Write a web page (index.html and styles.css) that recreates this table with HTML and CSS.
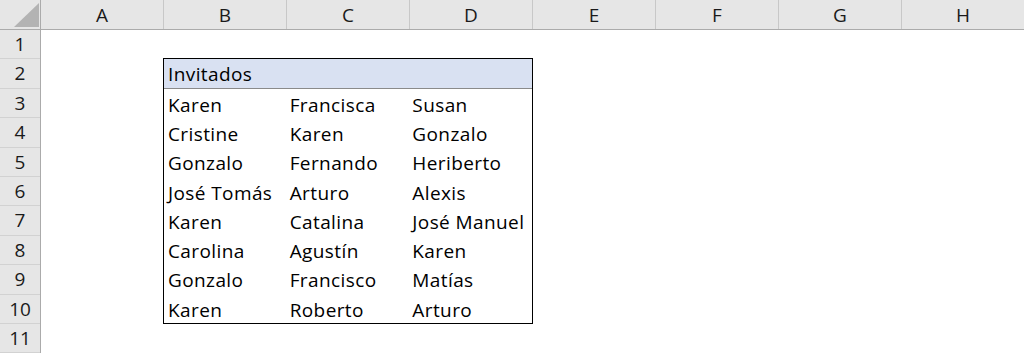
FILE: index.html
```html
<!DOCTYPE html>
<html lang="es">

<head>
    <meta charset="UTF-8">
    <meta name="viewport" content="width=device-width, initial-scale=1.0">
    <title>Invitados</title>
    <link rel="stylesheet" href="styles.css">
</head>

<body>

    <div class="sheet">
        <!-- Column letters -->
        <div class="col-heads">
            <div class="corner">
                <svg width="40" height="29" viewBox="0 0 40 29">
                    <polygon points="14,27 39,27 39,3" fill="#b3b3b3" />
                </svg>
            </div>
            <div class="col-head">A</div>
            <div class="col-head">B</div>
            <div class="col-head">C</div>
            <div class="col-head">D</div>
            <div class="col-head">E</div>
            <div class="col-head">F</div>
            <div class="col-head">G</div>
            <div class="col-head">H</div>
        </div>

        <div class="sheet-body">
            <!-- Row numbers -->
            <div class="row-heads">
                <div class="row-head">1</div>
                <div class="row-head">2</div>
                <div class="row-head">3</div>
                <div class="row-head">4</div>
                <div class="row-head">5</div>
                <div class="row-head">6</div>
                <div class="row-head">7</div>
                <div class="row-head">8</div>
                <div class="row-head">9</div>
                <div class="row-head">10</div>
                <div class="row-head">11</div>
            </div>

            <!-- Cells area, gridlines hidden -->
            <div class="cells">
                <div class="guests">
                    <div class="guests-title">Invitados</div>
                    <div class="cell">Karen</div>
                    <div class="cell">Francisca</div>
                    <div class="cell">Susan</div>
                    <div class="cell">Cristine</div>
                    <div class="cell">Karen</div>
                    <div class="cell">Gonzalo</div>
                    <div class="cell">Gonzalo</div>
                    <div class="cell">Fernando</div>
                    <div class="cell">Heriberto</div>
                    <div class="cell">José Tomás</div>
                    <div class="cell">Arturo</div>
                    <div class="cell">Alexis</div>
                    <div class="cell">Karen</div>
                    <div class="cell">Catalina</div>
                    <div class="cell">José Manuel</div>
                    <div class="cell">Carolina</div>
                    <div class="cell">Agustín</div>
                    <div class="cell">Karen</div>
                    <div class="cell">Gonzalo</div>
                    <div class="cell">Francisco</div>
                    <div class="cell">Matías</div>
                    <div class="cell">Karen</div>
                    <div class="cell">Roberto</div>
                    <div class="cell">Arturo</div>
                </div>
            </div>
        </div>
    </div>

</body>

</html>
```

FILE: styles.css
```css
body {
    margin: 0;
    padding: 0;
    background-color: #fff;
    font-family: "Open Sans", "Noto Sans", sans-serif;
    font-size: 19px;
    color: #000;
    overflow: hidden;
}

.sheet {
    width: 1024px;
    height: 355px;
    overflow: hidden;
}

/* Column header strip */
.col-heads {
    display: flex;
    height: 30px;
    background-color: #e6e6e6;
    border-bottom: 1px solid #ababab;
    box-sizing: border-box;
}

.corner {
    width: 41px;
    flex: none;
    border-right: 1px solid #ababab;
    box-sizing: border-box;
}

.corner svg {
    display: block;
}

.col-head {
    width: 123px;
    flex: none;
    border-right: 1px solid #c8c8c8;
    box-sizing: border-box;
    text-align: center;
    line-height: 31px;
    color: #1a1a1a;
}

.sheet-body {
    display: flex;
}

/* Row numbers on the left */
.row-heads {
    width: 41px;
    flex: none;
    display: grid;
    grid-template-rows: repeat(11, 29.4px);
    background-color: #e6e6e6;
    border-right: 1px solid #ababab;
    box-sizing: border-box;
}

.row-head {
    border-bottom: 1px solid #d2d2d2;
    text-align: center;
    line-height: 29px;
    color: #1a1a1a;
    overflow: hidden;
}

.cells {
    display: grid;
    grid-template-columns: repeat(8, 123px);
    grid-template-rows: repeat(11, 29.4px);
}

/* The guest list B2:D10 */
.guests {
    grid-column: 2 / 5;
    grid-row: 2 / 11;
    margin: -1px 0 0 -1px;
    display: grid;
    grid-template-columns: repeat(3, minmax(0, 1fr));
    grid-template-rows: repeat(9, minmax(0, 1fr));
    border: 1px solid #000;
    box-sizing: border-box;
    letter-spacing: 0.4px;
}

.guests-title {
    grid-column: 1 / 4;
    background-color: #d9e1f2;
    border-bottom: 1px solid #8a8a8a;
    padding-left: 4px;
    line-height: 31px;
    height: 100%;
    box-sizing: border-box;
    overflow: hidden;
    white-space: nowrap;
}

.cell {
    padding-left: 3px;
    line-height: 32px;
    height: 100%;
    white-space: nowrap;
}

.cell:nth-child(3n+2) {
    padding-left: 4px;
}
```
